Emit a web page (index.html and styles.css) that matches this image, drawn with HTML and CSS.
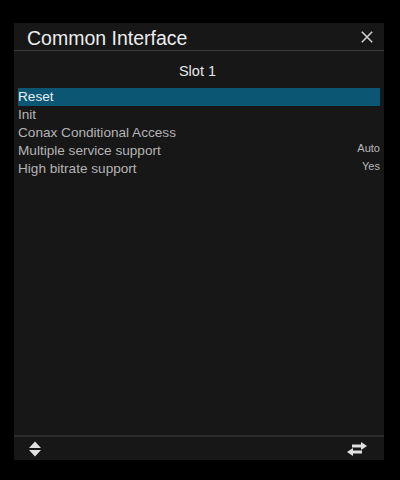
FILE: index.html
```html
<!DOCTYPE html>
<html>
<head>
<meta charset="utf-8">
<link rel="stylesheet" href="styles.css">
</head>
<body>
<div class="panel">
  <div class="header">
    <span class="title">Common Interface</span>
    <svg class="close" width="14" height="14" viewBox="0 0 14 14"><path d="M1.8 1.8 L12.2 12.2 M12.2 1.8 L1.8 12.2" stroke="#d4d4d4" stroke-width="1.5" fill="none"/></svg>
  </div>
  <div class="content">
    <div class="slot">Slot 1</div>
    <div class="list">
      <div class="row sel"><span>Reset</span></div>
      <div class="row"><span>Init</span></div>
      <div class="row"><span>Conax Conditional Access</span></div>
      <div class="row"><span>Multiple service support</span><span class="val">Auto</span></div>
      <div class="row"><span>High bitrate support</span><span class="val">Yes</span></div>
    </div>
  </div>
  <div class="footer">
    <svg width="14" height="16" viewBox="0 0 14 16"><path d="M7 0.5 L13 7 L1 7 Z M1 9 L13 9 L7 15.5 Z" fill="#e0e0e0"/></svg>
    <svg width="22" height="16" viewBox="0 0 22 16"><path d="M15 1 L21 5 L15 9 L15 6.5 L6 6.5 L6 3.5 L15 3.5 Z M7 7 L1 11 L7 15 L7 12.5 L16 12.5 L16 9.5 L7 9.5 Z" fill="#e0e0e0"/></svg>
  </div>
</div>
</body>
</html>
```
FILE: styles.css
```css
html, body { margin: 0; padding: 0; background: #000; }
body { width: 400px; height: 480px; font-family: "Liberation Sans", Arial, sans-serif; }
.panel {
  position: relative;
  margin: 23px 0 0 14px;
  width: 370px;
  height: 437px;
  background: #171717;
  display: flex;
  flex-direction: column;
}
.header {
  height: 27px;
  border-bottom: 1px solid #3a3a3a;
  display: flex;
  align-items: center;
  justify-content: space-between;
  padding: 0 10px 0 13px;
}
.title { color: #ececec; font-size: 19.5px; line-height: 27px; padding-top: 3px; }
.close { margin-top: 1px; }
.content { flex: 1; padding: 0 4px; }
.slot { text-align: center; color: #e6e6e6; font-size: 14.5px; line-height: 16px; margin-top: 12px; padding-right: 3px; }
.list { margin-top: 9px; }
.row {
  height: 18px;
  display: flex;
  justify-content: space-between;
  align-items: center;
  color: #b4b4b4;
  font-size: 13.6px;
}
.row span:first-child { margin-top: -1px; }
.row.sel { background: #0a5673; color: #e8eef2; }
.val { font-size: 11px; align-self: flex-start; margin-top: 0; color: #b8b8b8; }
.footer {
  height: 23px;
  border-top: 2px solid #2b2b2b;
  display: flex;
  justify-content: space-between;
  align-items: center;
  padding: 0 16px 0 14px;
}
```
